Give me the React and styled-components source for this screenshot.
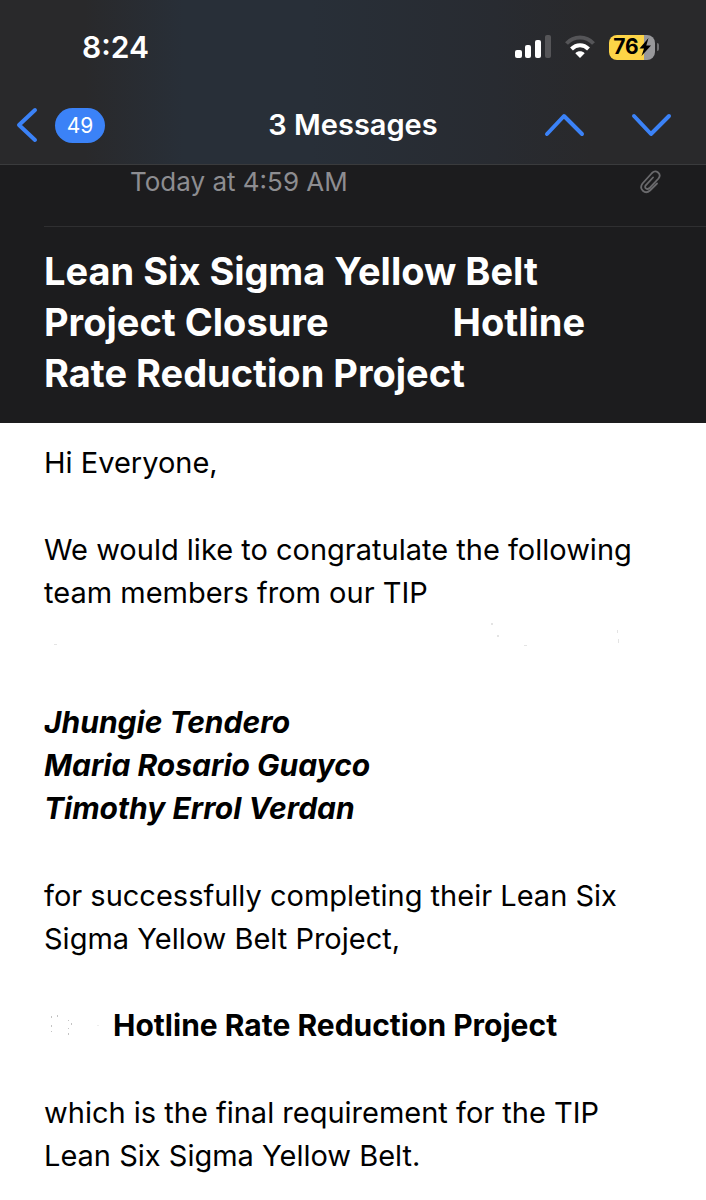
import React from "react";
import styled, { createGlobalStyle } from "styled-components";

const GlobalStyle = createGlobalStyle`
  *, *::before, *::after { box-sizing: border-box; }
  body {
    margin: 0;
    background: #fff;
    color: #000;
    font-family: Inter, "Liberation Sans", sans-serif;
  }
  h1, h2, p, ul { margin: 0; padding: 0; }
`;

const Page = styled.div`
  display: flex;
  flex-direction: column;
  min-height: 100vh;
`;

const TopBar = styled.header`
  background: linear-gradient(90deg, #29292b 0%, #29292b 12%, #282f38 26%, #282f38 44%, #282b31 70%, #29292b 84%);
  border-bottom: 1px solid #3a3b3d;
  color: #fff;
`;

const StatusBar = styled.div`
  display: flex;
  align-items: center;
  justify-content: space-between;
  height: 94px;
  padding: 0 47px 0 82px;
`;

const Clock = styled.time`
  font-size: 30px;
  line-height: 36px;
  font-weight: 600;
`;

const StatusIcons = styled.div`
  display: flex;
  align-items: center;
  gap: 13px;
`;

const Battery = styled.div`
  display: flex;
  align-items: center;
  gap: 2px;
`;

const BatteryBody = styled.div`
  display: flex;
  align-items: center;
  justify-content: center;
  width: 46px;
  height: 25px;
  border-radius: 8px;
  background: linear-gradient(90deg, #fdd447 76%, #98989b 76%);
  color: #000;
  font-size: 21px;
  line-height: 24px;
  font-weight: 700;
`;

const BatteryTip = styled.div`
  width: 2px;
  height: 8px;
  border-radius: 0 2px 2px 0;
  background: #6f6f72;
`;

const NavBar = styled.nav`
  display: grid;
  grid-template-columns: 1fr auto 1fr;
  align-items: center;
  height: 62px;
  margin-bottom: 8px;
  padding: 0 16px;
`;

const IconButton = styled.button`
  display: flex;
  align-items: center;
  gap: 17px;
  padding: 0;
  border: 0;
  background: none;
  color: #3b82f7;
  font: inherit;
  cursor: pointer;
`;

const Count = styled.span`
  width: 50px;
  border-radius: 18px;
  background: #3b82f7;
  color: #fff;
  font-size: 21px;
  line-height: 35px;
  text-align: center;
`;

const NavTitle = styled.h1`
  font-size: 29px;
  line-height: 36px;
  font-weight: 600;
`;

const Arrows = styled.div`
  display: flex;
  justify-content: flex-end;
  gap: 46px;
  padding-right: 18px;
`;

const MessageHead = styled.section`
  background: #1c1c1e;
  color: #fff;
  padding-left: 44px;
`;

const Meta = styled.div`
  display: flex;
  align-items: center;
  justify-content: space-between;
  height: 62px;
  padding: 0 44px 28px 86px;
  border-bottom: 1px solid #2f2f31;
  color: #8d8d91;
  font-size: 26px;
  line-height: 34px;
`;

const Subject = styled.h2`
  padding: 19px 44px 24px 0;
  font-size: 38px;
  line-height: 51px;
  font-weight: 700;
`;

const Redacted = styled.span`
  display: inline-block;
  width: ${(p) => p.$width}px;
`;

const Body = styled.main`
  display: flex;
  flex-direction: column;
  gap: 44px;
  padding: 18px 44px 20px;
  font-size: 29px;
  line-height: 43px;
`;

const Erased = styled.svg`
  display: block;
  width: 100%;
  height: 43px;
`;

const Names = styled.ul`
  list-style: none;
  font-size: 30px;
  font-weight: 700;
  font-style: italic;
`;

const ProjectLine = styled.p`
  display: flex;
  gap: 13px;
  font-size: 30px;
  font-weight: 700;
`;

function Signal() {
  return (
    <svg width="36" height="24" viewBox="0 0 36 24" fill="#fff" aria-hidden="true">
      <rect x="0" y="15" width="7" height="8" rx="2" />
      <rect x="10" y="10" width="6" height="13" rx="2" />
      <rect x="20" y="5" width="6" height="18" rx="2" />
      <rect x="30" y="0" width="6" height="23" rx="2" fill="#555558" />
    </svg>
  );
}

function Wifi() {
  return (
    <svg width="32" height="24" viewBox="0 0 32 24" aria-hidden="true">
      <path d="M2.500 8.500C10 .5 22 .5 29.500 8.500" fill="none" stroke="#555558" strokeWidth="4" />
      <path d="M7.500 14C12.500 9 19.500 9 24.500 14" fill="none" stroke="#fff" strokeWidth="4" />
      <path d="M11.300 18.200C14 15.700 18 15.700 20.700 18.200L16 23Z" fill="#fff" />
    </svg>
  );
}

function Bolt() {
  return (
    <svg width="12" height="20" viewBox="0 0 12 20" fill="#000" aria-hidden="true">
      <path d="M9.500 1L.5 11.500H5L2.500 19L12 8.500H7.300Z" />
    </svg>
  );
}

function Chevron({ width, height, points }) {
  return (
    <svg width={width} height={height} viewBox={`0 0 ${width} ${height}`} aria-hidden="true">
      <polyline points={points} fill="none" stroke="currentColor" strokeWidth="4" strokeLinecap="round" strokeLinejoin="round" />
    </svg>
  );
}

function Paperclip() {
  return (
    <svg width="22" height="24" viewBox="0 0 22 24" fill="none" stroke="#69696c" strokeWidth="1.800" strokeLinecap="round" role="img" aria-label="Attachment">
      <path d="M17 13.500L10 20.500C5 25-1.500 19 2.500 13.500L12 3C16-1 22 4 18.500 8.500L9.500 18C7 20.500 3.500 17.500 6 15L13 7.500" />
    </svg>
  );
}

const people = ["Jhungie Tendero", "Maria Rosario Guayco", "Timothy Errol Verdan"];

export default function App() {
  return (
    <Page>
      <GlobalStyle />
      <TopBar>
        <StatusBar>
          <Clock>8:24</Clock>
          <StatusIcons>
            <Signal />
            <Wifi />
            <Battery>
              <BatteryBody>76<Bolt /></BatteryBody>
              <BatteryTip />
            </Battery>
          </StatusIcons>
        </StatusBar>
        <NavBar>
          <IconButton aria-label="Back, 49 unread">
            <Chevron width={22} height={36} points="19,3 3,18 19,33" />
            <Count>49</Count>
          </IconButton>
          <NavTitle>3 Messages</NavTitle>
          <Arrows>
            <IconButton aria-label="Previous message">
              <Chevron width={41} height={24} points="3,21 20,3 38,21" />
            </IconButton>
            <IconButton aria-label="Next message">
              <Chevron width={41} height={24} points="3,3 20,21 38,3" />
            </IconButton>
          </Arrows>
        </NavBar>
      </TopBar>
      <MessageHead>
        <Meta>
          <time>Today at 4:59 AM</time>
          <Paperclip />
        </Meta>
        <Subject>
          Lean Six Sigma Yellow Belt Project Closure <Redacted $width={106} /> Hotline Rate Reduction Project
        </Subject>
      </MessageHead>
      <Body>
        <p>Hi Everyone,</p>
        <div>
          <p>We would like to congratulate the following team members from our TIP</p>
          <Erased viewBox="0 0 618 43" preserveAspectRatio="xMinYMin meet" fill="#e4e4e4" aria-hidden="true">
            <rect x="447" y="9" width="2" height="2" />
            <rect x="453" y="21" width="2" height="2" />
            <rect x="480" y="31" width="3" height="1" />
            <rect x="573" y="16" width="1" height="3" />
            <rect x="574" y="25" width="1" height="4" />
            <rect x="10" y="30" width="3" height="1" />
          </Erased>
        </div>
        <Names>
          {people.map((name) => (
            <li key={name}>{name}</li>
          ))}
        </Names>
        <p>for successfully completing their Lean Six Sigma Yellow Belt Project,</p>
        <ProjectLine>
          <svg width="56" height="43" viewBox="0 0 56 43" fill="#c4c4c4" aria-hidden="true">
            <path d="M7 12h1v2H7zM13 11h1v2h-1zM7 21h1v2H7zM7 27h1v1H7zM24 16h1v1h-1zM27 19h1v2h-1zM24 24h1v1h-1zM24 29h1v2h-1z" />
            <rect x="53" y="21" width="2" height="1" fill="#eee" />
          </svg>
          Hotline Rate Reduction Project
        </ProjectLine>
        <p>which is the final requirement for the TIP Lean Six Sigma Yellow Belt.</p>
      </Body>
    </Page>
  );
}
